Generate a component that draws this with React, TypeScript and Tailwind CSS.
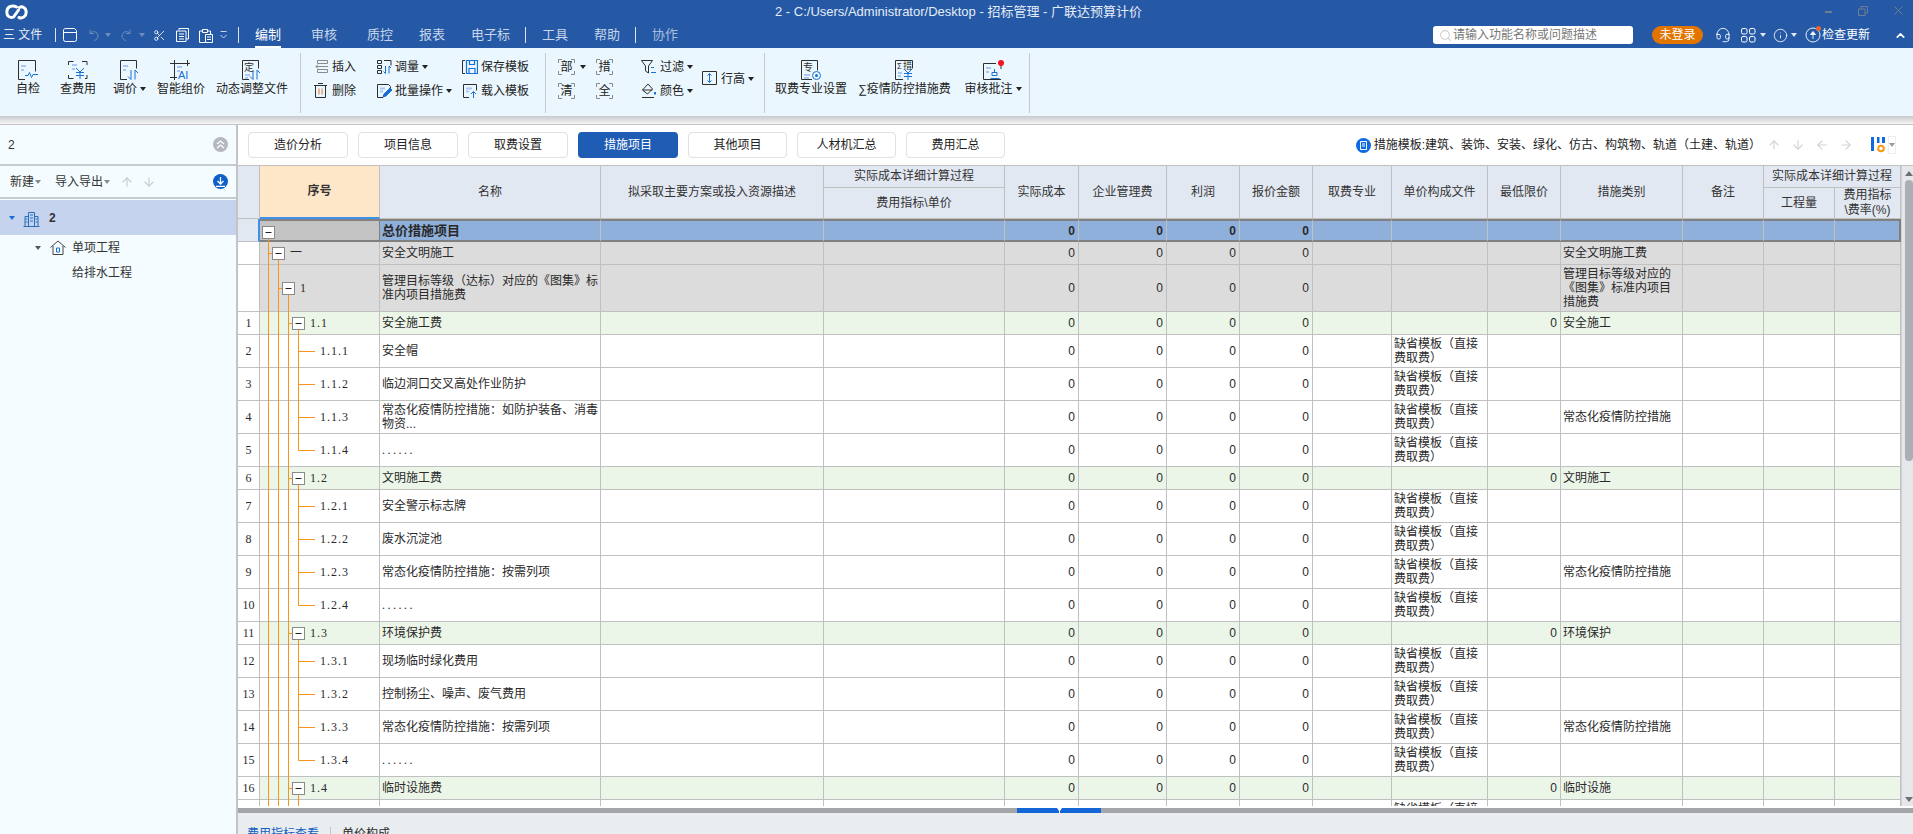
import { ArrowDown, ArrowLeft, ArrowRight, ArrowUp, ChevronUp, Headset, Info, Scissors, Search } from 'lucide-react';

const INK = '#2e2e2e';
const BLUE = '#1a6fd4';
const PALE = '#a9c6f5';
const TREE = '#f7941e';

const GRID = 'grid grid-cols-[22px_120px_221px_223px_181px_74px_88px_73px_73px_79px_96px_73px_122px_81px_71px_66px]';

// ── Little drawings ────────────────────────────────────────────────

function Caret({ color = '#222222' }: { color?: string }) {
  return (
    <svg width="6" height="4" viewBox="0 0 6 4" className="shrink-0">
      <path d="M0 0h6L3 4z" fill={color} />
    </svg>
  );
}

function Logo() {
  return (
    <svg width="23" height="16" viewBox="0 0 23 16" fill="none" stroke="#fff" strokeWidth="3" strokeLinecap="round">
      <path d="M11.500 3C8 .8 2 2 1.800 8c-.1 4.200 3.500 6.500 6.700 5L13.500 6" />
      <path d="M14 13.500c3.500 1.500 7.300-1.500 7.200-5.500C21 3.500 17 1.800 14.500 3.500" />
    </svg>
  );
}

function Bars({ x = 4, y = 6 }: { x?: number; y?: number }) {
  return <path d={`M${x} ${y}h5M${x} ${y + 4}h3`} stroke={PALE} strokeWidth="2" fill="none" />;
}

function Arrows({ x = 11, y = 10 }: { x?: number; y?: number }) {
  return (
    <path
      d={`M${x} ${y}v9.500M${x - 3} ${y + 6.500}l3 3M${x + 4} ${y + 9.500}v-9.500M${x + 4} ${y}l3 3`}
      stroke={BLUE}
      fill="none"
    />
  );
}

function Yen({ x = 10, y = 8 }: { x?: number; y?: number }) {
  return <path d={`M${x} ${y}l4 4 4-4M${x + 4} ${y + 4}v7M${x} ${y + 4.500}h8M${x} ${y + 7.500}h8`} stroke={BLUE} fill="none" />;
}

function Svg20({ children }: { children: React.ReactNode }) {
  return (
    <svg width="22" height="20" viewBox="0 0 22 20" fill="none" stroke={INK} className="shrink-0">
      {children}
    </svg>
  );
}

const cjkText = { fontFamily: "'Noto Sans CJK SC',sans-serif" };

const bigIcons: Record<string, React.ReactNode> = {
  check: (
    <Svg20>
      <path d="M8 19.500H1.500V.5h17v11" />
      <Bars />
      <path d="M8 15.500h3l1.500-3 2 5 1.500-3h5" stroke={BLUE} />
    </Svg20>
  ),
  fee: (
    <Svg20>
      <path d="M1.500 5V1.500h5M15 1.500h5V5M1.500 15v3.500h5M20 15v3.500h-2" />
      <Bars x={5} y={5} />
      <Yen x={9} y={8} />
    </Svg20>
  ),
  adjust: (
    <Svg20>
      <path d="M8 19.500H1.500V.5h16v8" />
      <Bars />
      <Arrows x={12} y={10} />
    </Svg20>
  ),
  ai: (
    <Svg20>
      <path d="M0 3.500h20M4.500 0v20M17.500 0v6M0 17.500h7" />
      <Bars x={7} y={7} />
      <text x="8" y="19" fontSize="11" fill={BLUE} stroke="none" style={{ fontFamily: "'Liberation Sans',sans-serif" }}>AI</text>
    </Svg20>
  ),
  dynamic: (
    <Svg20>
      <path d="M8 19.500H1.500V.5h16v8" />
      <text x="3" y="11" fontSize="10" fill={INK} stroke="none" style={cjkText}>定</text>
      <path d="M4 15h5M4 18h3" stroke={PALE} strokeWidth="2" />
      <Arrows x={12} y={10} />
    </Svg20>
  ),
  major: (
    <Svg20>
      <path d="M12 19.500H1.500V.5h16v10" />
      <text x="3" y="11" fontSize="10" fill={INK} stroke="none" style={cjkText}>专</text>
      <path d="M4 15h6M4 18h5" stroke={PALE} strokeWidth="2" />
      <circle cx="16.500" cy="15.500" r="4" stroke={BLUE} />
      <circle cx="16.500" cy="15.500" r="1.500" fill={BLUE} stroke="none" />
    </Svg20>
  ),
  epidemic: (
    <Svg20>
      <path d="M9 19.500H1.500V.5h17v8" />
      <text x="3" y="9" fontSize="8" fill={INK} stroke="none" style={cjkText}>Σ</text>
      <text x="9" y="9" fontSize="9" fill={INK} stroke="none" style={cjkText}>措</text>
      <path d="M4 13h4M4 16h3" stroke={PALE} strokeWidth="2" />
      <Yen x={10} y={9} />
    </Svg20>
  ),
  audit: (
    <Svg20>
      <path d="M19 19.500H1.500V3.500H14" />
      <path d="M19 5v4" />
      <Bars x={4} y={8} />
      <path d="M10 12.500h5v3h-5zM12.500 9v3M8.500 18.500h9" stroke={BLUE} />
      <circle cx="19" cy="3" r="3" fill="#f2141e" stroke="none" />
    </Svg20>
  ),
};

const smallIcons: Record<string, React.ReactNode> = {
  insert: (
    <path d="M4.500 1.500h10v3h-10zM4.500 10.500h10v3h-10zM15 7.500H3M5 5.500l-2 2 2 2" stroke="#8a8a8a" />
  ),
  remove: (
    <>
      <path d="M1 2.500h13M5 .5h5M2.500 3v11.500h10V3" />
      <path d="M6 5.500v6M9 5.500v6" stroke="#e8742a" />
    </>
  ),
  quantity: (
    <>
      <path d="M1.500 1.500h4v3h-4zM1.500 6.500h4v3h-4zM1.500 11.500h4v3h-4zM8 1.500h7v5" />
      <path d="M9.500 7v7.500M7.500 12.500l2 2M13 14.500V7M13 7l2 2" stroke={BLUE} />
    </>
  ),
  batch: (
    <>
      <path d="M7 14.500H1.500V1.500h11l2 2v4" />
      <path d="M4 5.500h5M4 8.500h3" stroke={PALE} strokeWidth="2" />
      <path d="M7 14l1-3 6-6 2 2-6 6z" stroke={BLUE} fill={BLUE} />
    </>
  ),
  saveTpl: (
    <>
      <path d="M3 14.500H.5V1.500H3" />
      <path d="M4.500 1.500h11v13h-11zM7.500 1.500v4h5v-4M7 14.500v-5h6v5" stroke={BLUE} strokeWidth="1.200" />
    </>
  ),
  loadTpl: (
    <>
      <path d="M7 14.500H1.500V1.500h13v6" />
      <path d="M4 5.500h6M4 8.500h3" stroke={PALE} strokeWidth="2" />
      <path d="M11.500 15V8.500M9 11l2.500-2.500L14 11" stroke={BLUE} />
    </>
  ),
  filter: (
    <>
      <path d="M.5 1.500h11L7.500 7v7l-3-2V7z" />
      <path d="M10 8.500h3M10 13.500h5" stroke={BLUE} />
    </>
  ),
  color: (
    <>
      <path d="M7 1 1.500 7l5 4 5-5zM1.500 7h10M1 14.500h12" />
      <path d="M14 9v2.500" stroke={BLUE} strokeWidth="2" />
    </>
  ),
  rowHeight: (
    <>
      <path d="M.5 .5h14v13H.5z" />
      <path d="M7.500 2.500v9M5.500 4.500l2-2 2 2M5.500 9.500l2 2 2-2" stroke={BLUE} />
    </>
  ),
};

function SmallIcon({ name }: { name: string }) {
  return (
    <svg width="16" height="16" viewBox="0 0 16 16" fill="none" stroke={INK} className="shrink-0">
      {smallIcons[name]}
    </svg>
  );
}

function BuildingIcon() {
  return (
    <svg width="17" height="18" viewBox="0 0 17 18" fill="none" stroke="#2a6db5">
      <path d="M5.500 17V3.500h6V17M2 17V7.500h3.500M11.500 7.500H15V17M.5 17.500h16" />
      <path d="M7 6h3M7 9h3M7 12h3M2.500 10h2M12.500 10h2M2.500 13h2M12.500 13h2" stroke={BLUE} />
    </svg>
  );
}

function HouseIcon() {
  return (
    <svg width="16" height="15" viewBox="0 0 16 15" fill="none" stroke="#444444">
      <path d="M.5 7.500 8 1l7.500 6.500M3 6v8.500h10V6" />
      <path d="M6.500 8h3v4h-3z" stroke={BLUE} />
    </svg>
  );
}

// ── Ribbon ─────────────────────────────────────────────────────────

function BigButton({ icon, label, w, caret }: { icon: string; label: string; w: string; caret?: boolean }) {
  return (
    <div className={`flex flex-col items-center shrink-0 ${w}`}>
      {bigIcons[icon]}
      <div className="mt-[2px] flex items-center gap-[3px] leading-[14px] whitespace-nowrap">
        {label}
        {caret && <Caret />}
      </div>
    </div>
  );
}

function SmallButton({ icon, label, caret }: { icon: string; label: string; caret?: boolean }) {
  return (
    <div className="flex items-center h-[24px] whitespace-nowrap">
      <SmallIcon name={icon} />
      <span className="ml-[3px]">{label}</span>
      {caret && <span className="ml-[3px]"><Caret /></span>}
    </div>
  );
}

function RibbonSep() {
  return <div className="w-px h-[60px] mt-[5px] bg-[#c6cacd] shrink-0" />;
}

function BracketChar({ text }: { text: string }) {
  return (
    <div className="relative w-[17px] h-[16px] flex items-center justify-center">
      <svg width="17" height="16" viewBox="0 0 17 16" fill="none" stroke="#8a8a8a" className="absolute inset-0">
        <path d="M.5 4V.5H4M13 .5h3.500V4M.5 12v3.500H4M13 15.500h3.500V12" />
      </svg>
      <span className="leading-none">{text}</span>
    </div>
  );
}

function Ribbon() {
  return (
    <div className="flex items-start h-[68px] bg-[#ebf7fe] shrink-0 text-[#222222]">
      <div className="flex pl-[6px] pt-[12px] w-[300px] shrink-0">
        <BigButton icon="check" label="自检" w="w-[44px]" />
        <BigButton icon="fee" label="查费用" w="w-[56px]" />
        <BigButton icon="adjust" label="调价" w="w-[47px]" caret />
        <BigButton icon="ai" label="智能组价" w="w-[56px]" />
        <BigButton icon="dynamic" label="动态调整文件" w="w-[86px]" />
      </div>
      <RibbonSep />
      <div className="flex pl-[12px] pt-[7px] w-[244px] shrink-0">
        <div className="w-[63px]">
          <SmallButton icon="insert" label="插入" />
          <SmallButton icon="remove" label="删除" />
        </div>
        <div className="w-[86px]">
          <SmallButton icon="quantity" label="调量" caret />
          <SmallButton icon="batch" label="批量操作" caret />
        </div>
        <div>
          <SmallButton icon="saveTpl" label="保存模板" />
          <SmallButton icon="loadTpl" label="载入模板" />
        </div>
      </div>
      <RibbonSep />
      <div className="flex pl-[12px] pt-[11px] w-[218px] shrink-0">
        <div className="w-[38px] flex flex-col gap-[8px]">
          <div className="flex items-center gap-[5px]">
            <BracketChar text="部" />
            <Caret />
          </div>
          <BracketChar text="清" />
        </div>
        <div className="w-[45px] flex flex-col gap-[8px]">
          <BracketChar text="措" />
          <BracketChar text="全" />
        </div>
        <div className="w-[61px] -mt-[4px]">
          <SmallButton icon="filter" label="过滤" caret />
          <SmallButton icon="color" label="颜色" caret />
        </div>
        <div className="mt-[8px]">
          <SmallButton icon="rowHeight" label="行高" caret />
        </div>
      </div>
      <RibbonSep />
      <div className="flex pl-[5px] pt-[12px] w-[264px] shrink-0">
        <BigButton icon="major" label="取费专业设置" w="w-[82px]" />
        <BigButton icon="epidemic" label="∑疫情防控措施费" w="w-[105px]" />
        <BigButton icon="audit" label="审核批注" w="w-[72px]" caret />
      </div>
      <RibbonSep />
    </div>
  );
}

// ── Title and menu ─────────────────────────────────────────────────

function TitleBar() {
  return (
    <div className="bg-[#2559a5] shrink-0 h-[48px] flex flex-col">
      <div className="flex items-center h-[24px]">
        <div className="ml-[5px]"><Logo /></div>
        <div className="ml-[747px] text-[13px] text-[#e4ecf6] whitespace-nowrap">
          2 - C:/Users/Administrator/Desktop - 招标管理 - 广联达预算计价
        </div>
        <div className="ml-auto mr-[10px] flex items-center gap-[26px] pb-[3px]">
          <div className="w-[7px] h-[2px] bg-[#6f7f92] mt-[3px]" />
          <svg width="10" height="10" viewBox="0 0 10 10" fill="none" stroke="#6f7f92">
            <path d="M.5 3h6.500v6.500H.5zM3 3V.5h6.500V7H7" />
          </svg>
          <svg width="9" height="9" viewBox="0 0 9 9" fill="none" stroke="#6f7f92">
            <path d="M.5 .5l8 8M8.500 .5l-8 8" />
          </svg>
        </div>
      </div>
      <div className="flex items-center h-[24px] pb-[2px] pr-[6px] text-[13px] text-[#c6d5ea]">
        <span className="ml-[3px] w-[39px] text-[12px] text-[#e4ecf6] whitespace-pre">三 文件</span>
        <div className="ml-[13px] w-px h-[14px] bg-[#dbe5f2]" />
        <svg width="14" height="14" viewBox="0 0 14 14" fill="none" stroke="#fff" className="ml-[7px]">
          <path d="M3 .5h8.500l2 2v9a2 2 0 0 1-2 2h-9a2 2 0 0 1-2-2V3a2 2 0 0 1 2-2.500zM.5 4.500h13" />
        </svg>
        <svg width="12" height="12" viewBox="0 0 12 12" fill="none" stroke="#6d8dbd" className="ml-[10px]">
          <path d="M3 .5v4h4M3 4.500C5 1.500 11 2 11 7c0 2.500-2 4-4 4.500" />
        </svg>
        <span className="ml-[6px]"><Caret color="#6d8dbd" /></span>
        <svg width="12" height="12" viewBox="0 0 12 12" fill="none" stroke="#6d8dbd" className="ml-[10px]">
          <path d="M9 .5v4H5M9 4.500C7 1.500 1 2 1 7c0 2.500 2 4 4 4.500" />
        </svg>
        <span className="ml-[6px]"><Caret color="#6d8dbd" /></span>
        <Scissors size={13} color="#fff" strokeWidth={1.500} className="ml-[8px]" />
        <svg width="13" height="14" viewBox="0 0 13 14" fill="none" stroke="#fff" className="ml-[10px]">
          <path d="M3 2V.5h9.500v10.500H10M.5 3h9.500v10.500H.5zM3 6h5M3 8.500h5M3 11h5" />
        </svg>
        <svg width="14" height="15" viewBox="0 0 14 15" fill="none" stroke="#fff" className="ml-[10px]">
          <path d="M6 14.500H.5V3h3M9 3h2.500v3M3.500 1.500h5v3h-5zM6.500 6.500h7v8h-7zM8 9h4M8 11.500h4" />
        </svg>
        <svg width="7" height="9" viewBox="0 0 7 9" fill="none" stroke="#c6d5ea" className="ml-[7px]">
          <path d="M.5 .5h6M.5 4l3 3 3-3" />
        </svg>
        <div className="ml-[11px] w-px h-[16px] bg-[#dbe5f2]" />
        <span className="relative ml-[16px] text-white">
          编制
          <span className="absolute left-0 right-0 -bottom-[3px] h-[2px] bg-white" />
        </span>
        <span className="ml-[30px]">审核</span>
        <span className="ml-[30px]">质控</span>
        <span className="ml-[26px]">报表</span>
        <span className="ml-[26px]">电子标</span>
        <div className="ml-[15px] w-px h-[16px] bg-[#dbe5f2]" />
        <span className="ml-[16px]">工具</span>
        <span className="ml-[26px]">帮助</span>
        <div className="ml-[15px] w-px h-[16px] bg-[#dbe5f2]" />
        <span className="ml-[16px] text-[#a9bfdd]">协作</span>

        <div className="ml-auto w-[200px] h-[18px] bg-white rounded-[3px] flex items-center pl-[6px] text-[12px] text-[#777777]">
          <Search size={13} color="#cfcfcf" />
          <span className="ml-[1px]">请输入功能名称或问题描述</span>
        </div>
        <div className="ml-[19px] w-[51px] h-[18px] rounded-full bg-[#e37400] text-white text-[12px] flex items-center justify-center">未登录</div>
        <Headset size={16} color="#fff" strokeWidth={1.300} className="ml-[12px]" />
        <svg width="15" height="15" viewBox="0 0 15 15" fill="none" stroke="#fff" className="ml-[10px]">
          <rect x=".5" y=".5" width="5.500" height="5.500" rx="1.500" />
          <rect x="8.500" y=".5" width="5.500" height="5.500" rx="1.500" />
          <rect x=".5" y="8.500" width="5.500" height="5.500" rx="1.500" />
          <rect x="8.500" y="8.500" width="5.500" height="5.500" rx="1.500" />
        </svg>
        <span className="ml-[4px]"><Caret color="#dfe8f4" /></span>
        <Info size={15} color="#fff" strokeWidth={1.300} className="ml-[7px]" />
        <span className="ml-[3px]"><Caret color="#dfe8f4" /></span>
        <span className="relative ml-[8px]">
          <svg width="16" height="16" viewBox="0 0 16 16" fill="none" stroke="#e8f0fa">
            <circle cx="8" cy="8" r="7" />
            <path d="M8 4.500 5.500 7.500h5zM8 7.500V12" fill="#fff" />
          </svg>
          <span className="absolute -top-[1px] right-0 w-[5px] h-[5px] rounded-full bg-[#f0622a]" />
        </span>
        <span className="ml-[1px] text-[12px] text-white">检查更新</span>
        <ChevronUp size={13} color="#fff" strokeWidth={3} className="ml-[24px]" />
      </div>
    </div>
  );
}

// ── Left tree panel ────────────────────────────────────────────────

function LeftPanel() {
  return (
    <div className="w-[238px] shrink-0 bg-[#f4fcff] border-r-2 border-[#c2c5c8] flex flex-col text-[#333333]">
      <div className="h-[41px] flex items-center justify-between pl-[8px] pr-[8px] border-b-2 border-[#c8cbce]">
        <span>2</span>
        <div className="w-[15px] h-[15px] rounded-full bg-[#b4b8bf] flex items-center justify-center">
          <svg width="9" height="9" viewBox="0 0 9 9" fill="none" stroke="#fff" strokeWidth="1.200">
            <path d="M1 4 4.500 1 8 4M1 8l3.500-3L8 8" />
          </svg>
        </div>
      </div>
      <div className="h-[33px] flex items-center pl-[10px] pr-[8px] border-b-2 border-[#c8cbce]">
        <span>新建</span>
        <span className="ml-[1px]"><Caret color="#8a8a8a" /></span>
        <span className="ml-[14px]">导入导出</span>
        <span className="ml-[1px]"><Caret color="#8a8a8a" /></span>
        <ArrowUp size={14} color="#c9cdd2" className="ml-[10px]" />
        <ArrowDown size={14} color="#c9cdd2" className="ml-[8px]" />
        <div className="ml-auto w-[15px] h-[15px] rounded-full bg-[#0e5fc8] flex items-center justify-center">
          <svg width="9" height="10" viewBox="0 0 9 10" fill="none" stroke="#fff" strokeWidth="1.300">
            <path d="M4.500 0v6.500M1.500 4l3 3 3-3M0 9.300h9" />
          </svg>
        </div>
      </div>
      <div className="h-[35px] mt-[1px] bg-[#c5d3ee] flex items-center pl-[9px]">
        <Caret color="#1a6fd4" />
        <span className="ml-[8px]"><BuildingIcon /></span>
        <span className="ml-[9px] font-bold">2</span>
      </div>
      <div className="h-[25px] flex items-center pl-[35px]">
        <Caret color="#555555" />
        <span className="ml-[9px]"><HouseIcon /></span>
        <span className="ml-[6px]">单项工程</span>
      </div>
      <div className="h-[25px] flex items-center pl-[72px]">给排水工程</div>
    </div>
  );
}

// ── Table data ─────────────────────────────────────────────────────

type Kind = 'root' | 'l1' | 'l2' | 'l3' | 'leaf';

interface Row {
  kind: Kind;
  no?: number;
  code: string;
  name: string;
  file?: string;
  limit?: string;
  cat?: string;
  last?: boolean;
}

const DEFAULT_FILE = '缺省模板（直接费取费）';
const COVID = '常态化疫情防控措施';

function group(no: number, code: string, name: string, cat: string, kids: string[]): Row[] {
  const rows: Row[] = [{ kind: 'l3', no, code, name, limit: '0', cat }];
  kids.forEach((kid, i) =>
    rows.push({
      kind: 'leaf',
      no: no + i + 1,
      code: `${code}.${i + 1}`,
      name: kid,
      file: DEFAULT_FILE,
      cat: kid.startsWith(COVID) ? COVID : undefined,
      last: i === kids.length - 1,
    }),
  );
  return rows;
}

const ROWS: Row[] = [
  { kind: 'root', code: '', name: '总价措施项目' },
  { kind: 'l1', code: '一', name: '安全文明施工', cat: '安全文明施工费' },
  {
    kind: 'l2',
    code: '1',
    name: '管理目标等级（达标）对应的《图集》标准内项目措施费',
    cat: '管理目标等级对应的《图集》标准内项目措施费',
  },
  ...group(1, '1.1', '安全施工费', '安全施工', ['安全帽', '临边洞口交叉高处作业防护', '常态化疫情防控措施：如防护装备、消毒物资...', '......']),
  ...group(6, '1.2', '文明施工费', '文明施工', ['安全警示标志牌', '废水沉淀池', '常态化疫情防控措施：按需列项', '......']),
  ...group(11, '1.3', '环境保护费', '环境保护', ['现场临时绿化费用', '控制扬尘、噪声、废气费用', '常态化疫情防控措施：按需列项', '......']),
  ...group(16, '1.4', '临时设施费', '临时设施', ['']),
];

const ROW_H: Record<Kind, string> = {
  root: 'h-[23px]',
  l1: 'h-[23px]',
  l2: 'h-[47px]',
  l3: 'h-[23px]',
  leaf: 'h-[33px]',
};

const ROW_PX: Record<Kind, number> = { root: 23, l1: 23, l2: 47, l3: 23, leaf: 33 };

const ROW_BG: Record<Kind, string> = {
  root: 'bg-[#8fb0da]',
  l1: 'bg-[#dcdcdc]',
  l2: 'bg-[#dcdcdc]',
  l3: 'bg-[#ecf6e8]',
  leaf: 'bg-white',
};

const CODE_PAD: Record<Kind, string> = {
  root: 'pl-[30px]',
  l1: 'pl-[30px]',
  l2: 'pl-[40px]',
  l3: 'pl-[50px]',
  leaf: 'pl-[60px]',
};

const LEVEL_X = [8.5, 18.5, 28.5, 38.5];

function TreeLines({ row }: { row: Row }) {
  const h = ROW_PX[row.kind];
  const mid = Math.floor(h / 2) + 0.5;
  const boxLevel = { root: 0, l1: 1, l2: 2, l3: 3, leaf: -1 }[row.kind];
  const lines: string[] = [];
  const through = row.kind === 'leaf' ? 3 : boxLevel;
  for (let i = 0; i < through; i++) lines.push(`M${LEVEL_X[i]} 0V${h}`);
  if (row.kind === 'leaf') {
    lines.push(`M${LEVEL_X[3]} 0V${row.last ? mid : h}`);
    lines.push(`M${LEVEL_X[3]} ${mid}H55`);
  } else {
    lines.push(`M${LEVEL_X[boxLevel]} ${mid}V${h}`);
    if (boxLevel > 0) lines.push(`M${LEVEL_X[boxLevel - 1]} ${mid}H${LEVEL_X[boxLevel]}`);
  }
  const bx = boxLevel >= 0 ? LEVEL_X[boxLevel] : 0;
  return (
    <svg width="120" height={h} viewBox={`0 0 120 ${h}`} fill="none" className="absolute left-0 top-0">
      <path d={lines.join('')} stroke={TREE} />
      {boxLevel >= 0 && (
        <>
          <rect x={bx - 6} y={mid - 6} width="12" height="12" fill="#fff" stroke="#8a8a8a" />
          <path d={`M${bx - 3} ${mid}h6`} stroke="#222222" />
        </>
      )}
    </svg>
  );
}

const CELL = 'flex items-center px-[2px] overflow-hidden leading-[14px] border-r border-[#c0c0c0]';
const SERIF = "[font-family:'Liberation_Serif','Noto_Sans_CJK_SC',serif]";

function TableRow({ row }: { row: Row }) {
  const root = row.kind === 'root';
  const lineY = root ? 'border-y-2 border-y-[#808080]' : 'border-b border-b-[#c0c0c0]';
  const cell = `${CELL} ${lineY} ${ROW_BG[row.kind]}`;
  const zero = (
    <span className={`ml-auto pr-[1px] ${root ? 'font-bold' : ''}`}>0</span>
  );
  return (
    <div className={`${GRID} shrink-0 ${ROW_H[row.kind]}`}>
      <div
        className={`flex items-center justify-center border-b border-b-[#c0c0c0] ${
          root ? 'bg-[#e2e8f2] border-r-2 border-r-[#3f90e8]' : 'bg-white border-r border-r-[#c0c0c0]'
        } ${SERIF}`}
      >
        {row.no}
      </div>
      <div
        className={`relative flex items-center ${CODE_PAD[row.kind]} ${lineY} border-r ${
          root ? 'bg-[#c3c3c3] border-r-[#808080]' : `${ROW_BG[row.kind]} border-r-[#c0c0c0]`
        } ${SERIF} tracking-[1px]`}
      >
        <TreeLines row={row} />
        <span className="relative">{row.code}</span>
      </div>
      <div className={`${cell} ${root ? 'text-[13px] font-bold' : ''} ${row.name === '......' ? `${SERIF} tracking-[2.500px]` : ''}`}>
        {row.name}
      </div>
      <div className={cell} />
      <div className={cell} />
      <div className={cell}>{zero}</div>
      <div className={cell}>{zero}</div>
      <div className={cell}>{zero}</div>
      <div className={cell}>{zero}</div>
      <div className={cell} />
      <div className={cell}>{row.file}</div>
      <div className={cell}>{row.limit ? zero : null}</div>
      <div className={cell}>{row.cat}</div>
      <div className={cell} />
      <div className={cell} />
      <div className={`${cell} ${root ? 'border-r-2 border-r-[#808080]' : ''}`} />
    </div>
  );
}

const HEAD = 'flex items-center justify-center text-center leading-[15px] bg-[#e2e8f2] border-r border-b border-[#c0c0c0] text-[#333333]';

function TableHead() {
  return (
    <div className={`${GRID} grid-rows-[22px_31px] shrink-0`}>
      <div className={`${HEAD} row-span-2`} />
      <div className={`${HEAD} row-span-2 !bg-[#fee6c8] font-bold border-b-2 !border-b-[#3f90e8]`}>序号</div>
      <div className={`${HEAD} row-span-2`}>名称</div>
      <div className={`${HEAD} row-span-2`}>拟采取主要方案或投入资源描述</div>
      <div className={HEAD}>实际成本详细计算过程</div>
      <div className={`${HEAD} row-span-2`}>实际成本</div>
      <div className={`${HEAD} row-span-2`}>企业管理费</div>
      <div className={`${HEAD} row-span-2`}>利润</div>
      <div className={`${HEAD} row-span-2`}>报价金额</div>
      <div className={`${HEAD} row-span-2`}>取费专业</div>
      <div className={`${HEAD} row-span-2`}>单价构成文件</div>
      <div className={`${HEAD} row-span-2`}>最低限价</div>
      <div className={`${HEAD} row-span-2`}>措施类别</div>
      <div className={`${HEAD} row-span-2`}>备注</div>
      <div className={`${HEAD} col-span-2`}>实际成本详细计算过程</div>
      <div className={`${HEAD} col-start-5 row-start-2`}>费用指标\单价</div>
      <div className={`${HEAD} col-start-15 row-start-2`}>工程量</div>
      <div className={`${HEAD} col-start-16 row-start-2`}>
        费用指标
        <br />
        \费率(%)
      </div>
    </div>
  );
}

function ScrollBar() {
  return (
    <div className="flex-1 flex flex-col items-end bg-[#e6e7ea] border-l border-[#d0d2d6] pt-[5px] pb-[4px]">
      <svg width="8" height="5" viewBox="0 0 8 5" className="shrink-0">
        <path d="M0 5h8L4 0z" fill="#6e7075" />
      </svg>
      <div className="mt-[4px] w-[8px] h-[281px] rounded-[4px] bg-[#abaeb5] shrink-0" />
      <svg width="8" height="5" viewBox="0 0 8 5" className="shrink-0 mt-auto">
        <path d="M0 0h8L4 5z" fill="#6e7075" />
      </svg>
    </div>
  );
}

// ── Right pane ─────────────────────────────────────────────────────

const TABS = ['造价分析', '项目信息', '取费设置', '措施项目', '其他项目', '人材机汇总', '费用汇总'];

function TabBar() {
  return (
    <div className="h-[40px] shrink-0 flex items-center pl-[10px] pr-[17px] text-[#222222]">
      <div className="flex gap-[10px]">
        {TABS.map((tab, i) => (
          <div
            key={tab}
            className={`h-[26px] rounded-[4px] flex items-center justify-center ${i > 3 ? 'w-[99px]' : 'w-[100px]'} ${
              i === 3 ? 'bg-[#1f5cb3] text-white' : 'bg-white border border-[#dfe1e3]'
            }`}
          >
            {tab}
          </div>
        ))}
      </div>
      <div className="ml-auto flex items-center">
        <svg width="15" height="15" viewBox="0 0 15 15" className="shrink-0">
          <circle cx="7.500" cy="7.500" r="7.500" fill="#0e6ae0" />
          <path d="M4.500 3.500h6v8h-6zM6 6h3M6 8h3" fill="none" stroke="#fff" />
        </svg>
        <span className="ml-[3px] whitespace-nowrap">措施模板:建筑、装饰、安装、绿化、仿古、构筑物、轨道（土建、轨道）</span>
        <ArrowUp size={14} color="#d0d4d9" className="ml-[6px]" />
        <ArrowDown size={14} color="#d0d4d9" className="ml-[10px]" />
        <ArrowLeft size={14} color="#d0d4d9" className="ml-[10px]" />
        <ArrowRight size={14} color="#d0d4d9" className="ml-[10px]" />
        <svg width="14" height="16" viewBox="0 0 14 16" className="ml-[18px] shrink-0">
          <path d="M0 0h3v14H0zM6 0h2.500v6H6zM11 0h3v6h-3z" fill="#0e6ae0" />
          <circle cx="10" cy="11.500" r="2.800" fill="none" stroke="#f59a14" strokeWidth="2" />
        </svg>
        <div className="ml-[3px] w-[8px] h-[18px] border border-[#eceef0] flex items-center justify-center">
          <Caret color="#9a9a9a" />
        </div>
      </div>
    </div>
  );
}

export default function App() {
  return (
    <div className="w-[1913px] h-[834px] overflow-hidden flex flex-col bg-white text-[12px] text-[#2a2a2a] [font-family:'Liberation_Sans','Noto_Sans_CJK_SC',sans-serif]">
      <TitleBar />
      <Ribbon />
      <div className="h-[8px] shrink-0 bg-gradient-to-b from-[#c6c8cc] to-[#f7f7f7]" />
      <div className="h-px shrink-0 bg-[#c4c4c4]" />

      <div className="flex-1 flex min-h-0">
        <LeftPanel />
        <div className="flex-1 flex flex-col min-w-0">
          <TabBar />
          <div className="h-[641px] shrink-0 flex border-t border-[#c0c0c0] overflow-hidden">
            <div className="w-[1663px] shrink-0 flex flex-col overflow-hidden">
              <TableHead />
              {ROWS.map((row, i) => (
                <TableRow key={i} row={row} />
              ))}
            </div>
            <ScrollBar />
          </div>
          <div className="h-[2px] shrink-0 bg-white" />
          <div className="h-[5px] shrink-0 bg-[#a3a5a8] pl-[779px]">
            <div className="w-[84px] h-full bg-[#1466d6] flex justify-center">
              <svg width="5" height="5" viewBox="0 0 5 5">
                <path d="M0 0h5L3 3v2H2V3z" fill="#fff" />
              </svg>
            </div>
          </div>
          <div className="flex-1 bg-[#e9edf0] flex items-start pl-[9px] pt-[14px]">
            <span className="text-[#1060c0] leading-[14px]">费用指标查看</span>
            <div className="ml-[11px] w-px h-[14px] bg-[#c0c4c8]" />
            <span className="ml-[11px] leading-[14px]">单价构成</span>
          </div>
        </div>
      </div>
    </div>
  );
}
